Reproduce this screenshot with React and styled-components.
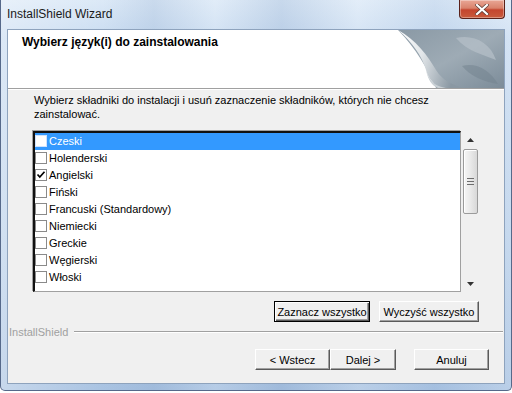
import React from 'react';
import styled, { createGlobalStyle, css } from 'styled-components';

const Global = createGlobalStyle`
  html, body { margin: 0; padding: 0; background: #ffffff; }
  body { font-family: "Liberation Sans", Arial, sans-serif; font-size: 11px; color: #000; }
  * { box-sizing: border-box; }
`;

const Window = styled.div`
  width: 512px;
  height: 391px;
  display: flex;
  flex-direction: column;
  background:
    linear-gradient(to right, rgba(255,255,255,0.35) 0%, rgba(255,255,255,0) 20%, rgba(120,150,190,0.18) 30%, rgba(255,255,255,0.15) 42%, rgba(120,150,190,0.2) 55%, rgba(255,255,255,0.2) 70%, rgba(140,170,210,0.15) 85%, rgba(255,255,255,0.2) 100%),
    linear-gradient(to bottom, #dce9f7 0%, #c9dcf1 10%, #b9d0ea 60%, #a9c3e2 100%);
  border: 1px solid #56698a;
  border-top: none;
  border-radius: 0 0 5px 5px;
  overflow: hidden;
`;

const TitleBar = styled.div`
  height: 30px;
  flex: none;
  display: flex;
  justify-content: space-between;
  align-items: flex-start;
  padding: 0 6px 0 6px;
`;

const TitleText = styled.div`
  font-size: 12px;
  line-height: 28px;
  color: #1a1a1a;
`;

const CloseButton = styled.div`
  width: 46px;
  height: 19px;
  border: 1px solid #5a211a;
  border-top: none;
  border-radius: 0 0 4px 4px;
  background: linear-gradient(to bottom, #e9a796 0%, #d9826c 45%, #c4452e 55%, #c85a3c 100%);
  box-shadow: inset 0 0 0 1px rgba(255,255,255,0.35);
  display: flex;
  align-items: center;
  justify-content: center;
`;

const Client = styled.div`
  flex: 1;
  margin: 0 7px 7px 7px;
  background: #f0f0f0;
  box-shadow: 0 0 0 1px #8ea3bd;
  display: flex;
  flex-direction: column;
`;

const Header = styled.div`
  height: 58px;
  flex: none;
  background: #ffffff;
  display: flex;
  justify-content: space-between;
`;

const HeaderTitle = styled.div`
  font-weight: bold;
  font-size: 12px;
  padding: 5px 0 0 14px;
  line-height: 14px;
`;

const Etched = styled.div`
  height: 2px;
  flex: none;
  border-top: 1px solid #a0a0a0;
  border-bottom: 1px solid #ffffff;
`;

const Body = styled.div`
  padding: 0 25px;
  display: flex;
  flex-direction: column;
`;

const Description = styled.div`
  margin-top: 3px;
  line-height: 14px;
  padding-left: 1px;
`;

const ListRow = styled.div`
  margin-top: 10px;
  height: 161px;
  display: flex;
  gap: 1px;
`;

const ListBox = styled.div`
  flex: 1;
  background: #ffffff;
  border-style: solid;
  border-width: 2px 1px 1px 2px;
  border-color: #111 #a0a0a0 #a0a0a0 #111;
  box-shadow: -1px -1px 0 #a0a0a0;
  display: flex;
  flex-direction: column;
`;

const Item = styled.div`
  height: 17px;
  display: flex;
  align-items: center;
  gap: 2px;
  line-height: 13px;
  padding-bottom: 1px;
  ${p => p.$selected && css`
    background: #3399ff;
    color: #ffffff;
  `}
`;

const Check = styled.span`
  width: 12px;
  height: 12px;
  flex: none;
  background: #ffffff;
  border: 1px solid ${p => (p.$selected ? '#cfe3ff' : '#8a8a8a')};
  display: flex;
  align-items: center;
  justify-content: center;
`;

const ScrollBar = styled.div`
  width: 17px;
  flex: none;
  display: flex;
  flex-direction: column;
  align-items: center;
`;

const Arrow = styled.div`
  width: 17px;
  height: 17px;
  flex: none;
  display: flex;
  align-items: center;
  justify-content: center;
`;

const Track = styled.div`
  flex: 1;
  width: 17px;
  display: flex;
  flex-direction: column;
  align-items: center;
  padding-top: 1px;
`;

const Thumb = styled.div`
  width: 15px;
  height: 65px;
  border: 1px solid #9b9b9b;
  border-radius: 2px;
  background: linear-gradient(to right, #f6f6f6 0%, #e9e9e9 50%, #d8d8d8 100%);
  box-shadow: inset 1px 1px 0 #ffffff;
  display: flex;
  align-items: center;
  justify-content: center;
`;

const ActionRow = styled.div`
  margin-top: 9px;
  display: flex;
  justify-content: flex-end;
  gap: 9px;
`;

const Button = styled.div`
  height: 21px;
  width: ${p => p.$w}px;
  background: #f0f0f0;
  display: flex;
  align-items: center;
  justify-content: center;
  border-style: solid;
  border-width: 1px;
  border-color: #ffffff #5a5a5a #5a5a5a #ffffff;
  box-shadow: inset -1px -1px 0 #a0a0a0;
  ${p => p.$default && css`
    border-color: #000;
    box-shadow: inset 1px 1px 0 #ffffff, inset -1px -1px 0 #5a5a5a, inset -2px -2px 0 #a0a0a0;
  `}
`;

const Brand = styled.div`
  margin-top: 3px;
  height: 13px;
  display: flex;
  align-items: center;
  padding: 0 1px;
`;

const BrandText = styled.span`
  color: #a0a0a0;
`;

const BrandLine = styled.div`
  flex: 1;
  margin-left: 6px;
  height: 2px;
  border-top: 1px solid #a0a0a0;
  border-bottom: 1px solid #ffffff;
`;

const NavRow = styled.div`
  margin-top: 11px;
  display: flex;
  justify-content: flex-end;
  padding-right: 15px;
`;

const NavGroup = styled.div`
  display: flex;
  gap: ${p => p.$gap || 0}px;
  margin-right: ${p => p.$mr || 0}px;
`;

function HeaderArt() {
  return (
    <svg width="106" height="58" viewBox="0 0 106 58">
      <defs>
        <linearGradient id="bg" x1="0" y1="0" x2="1" y2="1">
          <stop offset="0" stopColor="#8a99a5" />
          <stop offset="0.5" stopColor="#9eabb5" />
          <stop offset="1" stopColor="#7c8c99" />
        </linearGradient>
        <linearGradient id="curl" x1="0" y1="0" x2="1" y2="0.3">
          <stop offset="0" stopColor="#ffffff" />
          <stop offset="0.45" stopColor="#e2e6e9" />
          <stop offset="1" stopColor="#8a98a3" />
        </linearGradient>
      </defs>
      <rect width="106" height="58" fill="#ffffff" />
      <path d="M0 0 H106 V58 H38 C30 40 18 18 0 0 Z" fill="url(#bg)" />
      <path d="M58 8 C75 4 92 12 98 30 C84 24 70 22 58 8 Z" fill="#b6c1c9" opacity="0.7" />
      <path d="M64 36 C78 32 92 40 100 54 C86 52 72 46 64 36 Z" fill="#72828e" opacity="0.5" />
      <path d="M0 0 C14 12 24 26 28 40 C31 50 36 56 48 58 H66 C54 55 44 50 38 40 C30 26 18 10 0 0 Z" fill="url(#curl)" />
      <path d="M28 40 C31 50 36 56 48 58 H40 C34 56 30 50 28 40 Z" fill="#c9d0d5" />
    </svg>
  );
}

function CheckMark() {
  return (
    <svg width="10" height="10" viewBox="0 0 10 10">
      <path d="M1.5 4.5 L3.8 7 L8.5 1.8" fill="none" stroke="#000" strokeWidth="1.7" />
    </svg>
  );
}

const languages = [
  { name: 'Czeski', selected: true },
  { name: 'Holenderski' },
  { name: 'Angielski', checked: true },
  { name: 'Fiński' },
  { name: 'Francuski (Standardowy)' },
  { name: 'Niemiecki' },
  { name: 'Greckie' },
  { name: 'Węgierski' },
  { name: 'Włoski' },
];

export default function App() {
  return (
    <>
      <Global />
      <Window>
        <TitleBar>
          <TitleText>InstallShield Wizard</TitleText>
          <CloseButton>
            <svg width="14" height="11" viewBox="0 0 14 11">
              <path d="M2 1 L12 10 M12 1 L2 10" stroke="#5a3a33" strokeWidth="3.6" strokeLinecap="square" />
              <path d="M2 1 L12 10 M12 1 L2 10" stroke="#ffffff" strokeWidth="2.2" strokeLinecap="square" />
            </svg>
          </CloseButton>
        </TitleBar>
        <Client>
          <Header>
            <HeaderTitle>Wybierz język(i) do zainstalowania</HeaderTitle>
            <HeaderArt />
          </Header>
          <Etched />
          <Body>
            <Description>
              Wybierz składniki do instalacji i usuń zaznaczenie składników, których nie chcesz
              <br />
              zainstalować.
            </Description>
            <ListRow>
              <ListBox>
                {languages.map(l => (
                  <Item key={l.name} $selected={l.selected}>
                    <Check $selected={l.selected}>{l.checked && <CheckMark />}</Check>
                    <span>{l.name}</span>
                  </Item>
                ))}
              </ListBox>
              <ScrollBar>
                <Arrow>
                  <svg width="7" height="4" viewBox="0 0 7 4"><path d="M0 4 L3.5 0 L7 4 Z" fill="#333" /></svg>
                </Arrow>
                <Track>
                  <Thumb>
                    <svg width="7" height="7" viewBox="0 0 7 7">
                      <path d="M0 0.5 H7 M0 3.5 H7 M0 6.5 H7" stroke="#6d6d6d" strokeWidth="1" />
                    </svg>
                  </Thumb>
                </Track>
                <Arrow>
                  <svg width="7" height="4" viewBox="0 0 7 4"><path d="M0 0 L7 0 L3.5 4 Z" fill="#333" /></svg>
                </Arrow>
              </ScrollBar>
            </ListRow>
            <ActionRow>
              <Button $w={96} $default>Zaznacz wszystko</Button>
              <Button $w={100}>Wyczyść wszystko</Button>
            </ActionRow>
          </Body>
          <Brand>
            <BrandText>InstallShield</BrandText>
            <BrandLine />
          </Brand>
          <NavRow>
            <NavGroup $mr={18}>
              <Button $w={75}>&lt; Wstecz</Button>
              <Button $w={66}>Dalej &gt;</Button>
            </NavGroup>
            <Button $w={75}>Anuluj</Button>
          </NavRow>
        </Client>
      </Window>
    </>
  );
}
